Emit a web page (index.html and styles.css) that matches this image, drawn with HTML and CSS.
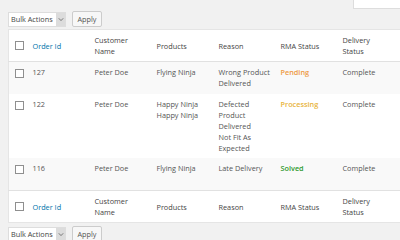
FILE: index.html
```html
<!DOCTYPE html>
<html>
<head>
<meta charset="utf-8">
<link rel="stylesheet" href="styles.css">
</head>
<body>
<div class="wrap">
  <div class="search-row"><div class="search-box"></div></div>
  <div class="tablenav">
    <div class="select"><span class="sel-label">Bulk Actions</span><span class="sel-arrow"><svg width="6" height="5" viewBox="0 0 6 5"><path d="M0.8 1.3 L3 3.6 L5.2 1.3" fill="none" stroke="#777" stroke-width="1"/></svg></span></div>
    <button class="apply">Apply</button>
  </div>
  <table class="list">
    <colgroup><col class="c-cb"><col class="c-col"><col class="c-col"><col class="c-col"><col class="c-col"><col class="c-col"><col class="c-last"></colgroup>
    <thead>
      <tr class="head">
        <td class="cb"><span class="check"></span></td>
        <th><a class="link">Order Id</a></th>
        <th>Customer<br>Name</th>
        <th>Products</th>
        <th>Reason</th>
        <th>RMA Status</th>
        <th>Delivery<br>Status</th>
      </tr>
    </thead>
    <tbody>
      <tr class="row r1 alt">
        <td class="cb"><span class="check"></span></td>
        <td>127</td>
        <td>Peter Doe</td>
        <td>Flying Ninja</td>
        <td>Wrong Product<br>Delivered</td>
        <td class="pending">Pending</td>
        <td>Complete</td>
      </tr>
      <tr class="row r2">
        <td class="cb"><span class="check"></span></td>
        <td>122</td>
        <td>Peter Doe</td>
        <td>Happy Ninja<br>Happy Ninja</td>
        <td>Defected<br>Product<br>Delivered<br>Not Fit As<br>Expected</td>
        <td class="processing">Processing</td>
        <td>Complete</td>
      </tr>
      <tr class="row r3 alt">
        <td class="cb"><span class="check"></span></td>
        <td>116</td>
        <td>Peter Doe</td>
        <td>Flying Ninja</td>
        <td>Late Delivery</td>
        <td class="solved">Solved</td>
        <td>Complete</td>
      </tr>
    </tbody>
    <tfoot>
      <tr class="foot">
        <td class="cb"><span class="check"></span></td>
        <th><a class="link">Order Id</a></th>
        <th>Customer<br>Name</th>
        <th>Products</th>
        <th>Reason</th>
        <th>RMA Status</th>
        <th>Delivery<br>Status</th>
      </tr>
    </tfoot>
  </table>
  <div class="tablenav bottom">
    <div class="select"><span class="sel-label">Bulk Actions</span><span class="sel-arrow"><svg width="6" height="5" viewBox="0 0 6 5"><path d="M0.8 1.3 L3 3.6 L5.2 1.3" fill="none" stroke="#777" stroke-width="1"/></svg></span></div>
    <button class="apply">Apply</button>
  </div>
</div>
</body>
</html>
```
FILE: styles.css
```css
html, body {
  margin: 0;
  padding: 0;
  background: #f1f1f1;
  overflow: hidden;
  width: 400px;
  height: 240px;
}
.wrap {
  padding-left: 8px;
  font-family: "Open Sans", "Noto Sans", sans-serif;
  font-size: 7.3px;
  color: #555;
}
.search-row {
  display: flex;
  justify-content: flex-end;
  height: 9px;
}
.search-box {
  width: 46px;
  height: 8px;
  background: #fff;
  border: 1px solid #ddd;
  border-top: none;
  border-right: none;
}
.tablenav {
  display: flex;
  align-items: center;
  gap: 6px;
  height: 20px;
}
.tablenav.bottom {
  margin-top: 1px;
}
.select {
  display: flex;
  align-items: stretch;
  height: 15px;
  border: 1px solid #ddd;
  background: #fff;
  box-sizing: border-box;
  width: 58px;
}
.sel-label {
  flex: 1;
  display: flex;
  align-items: center;
  padding-left: 2px;
  color: #444;
  white-space: nowrap;
  overflow: hidden;
}
.sel-arrow {
  width: 9px;
  background: #dcdcdc;
  display: flex;
  align-items: center;
  justify-content: center;
}
.apply {
  font: inherit;
  color: #555;
  height: 16px;
  width: 30px;
  padding: 0;
  background: #f7f7f7;
  border: 1px solid #ccc;
  border-radius: 2px;
}
.list {
  border-collapse: collapse;
  table-layout: fixed;
  width: 406px;
  background: #fff;
  border: 1px solid #e5e5e5;
  line-height: 11px;
}
.c-cb { width: 18px; }
.c-col { width: 62px; }
.c-last { width: 78px; }
.list th, .list td {
  text-align: left;
  font-weight: normal;
  vertical-align: top;
  color: #555;
  padding: 5px 4px 4px 6px;
}
.list th { color: #444; }
.list .cb {
  padding: 0;
  vertical-align: middle;
}
.head th, .foot th, .head .cb, .foot .cb {
  vertical-align: middle;
}
.head { height: 30px; border-bottom: 1px solid #e1e1e1; }
.foot { height: 31px; border-top: 1px solid #e1e1e1; }
.r1 { height: 32px; }
.r2 { height: 64px; }
.r3 { height: 33px; }
.row .cb { vertical-align: top; padding-top: 7px; }
.alt { background: #f9f9f9; }
.check {
  display: block;
  width: 7px;
  height: 7px;
  margin-left: 6px;
  border: 1px solid #8f8f8f;
  background: #fff;
}
.list .link { color: #0073aa; }
.list .pending { color: #ee9a45; font-weight: 600; }
.list .processing { color: #e8b43c; font-weight: 600; }
.list .solved { color: #2f9a2f; font-weight: 600; }
```
